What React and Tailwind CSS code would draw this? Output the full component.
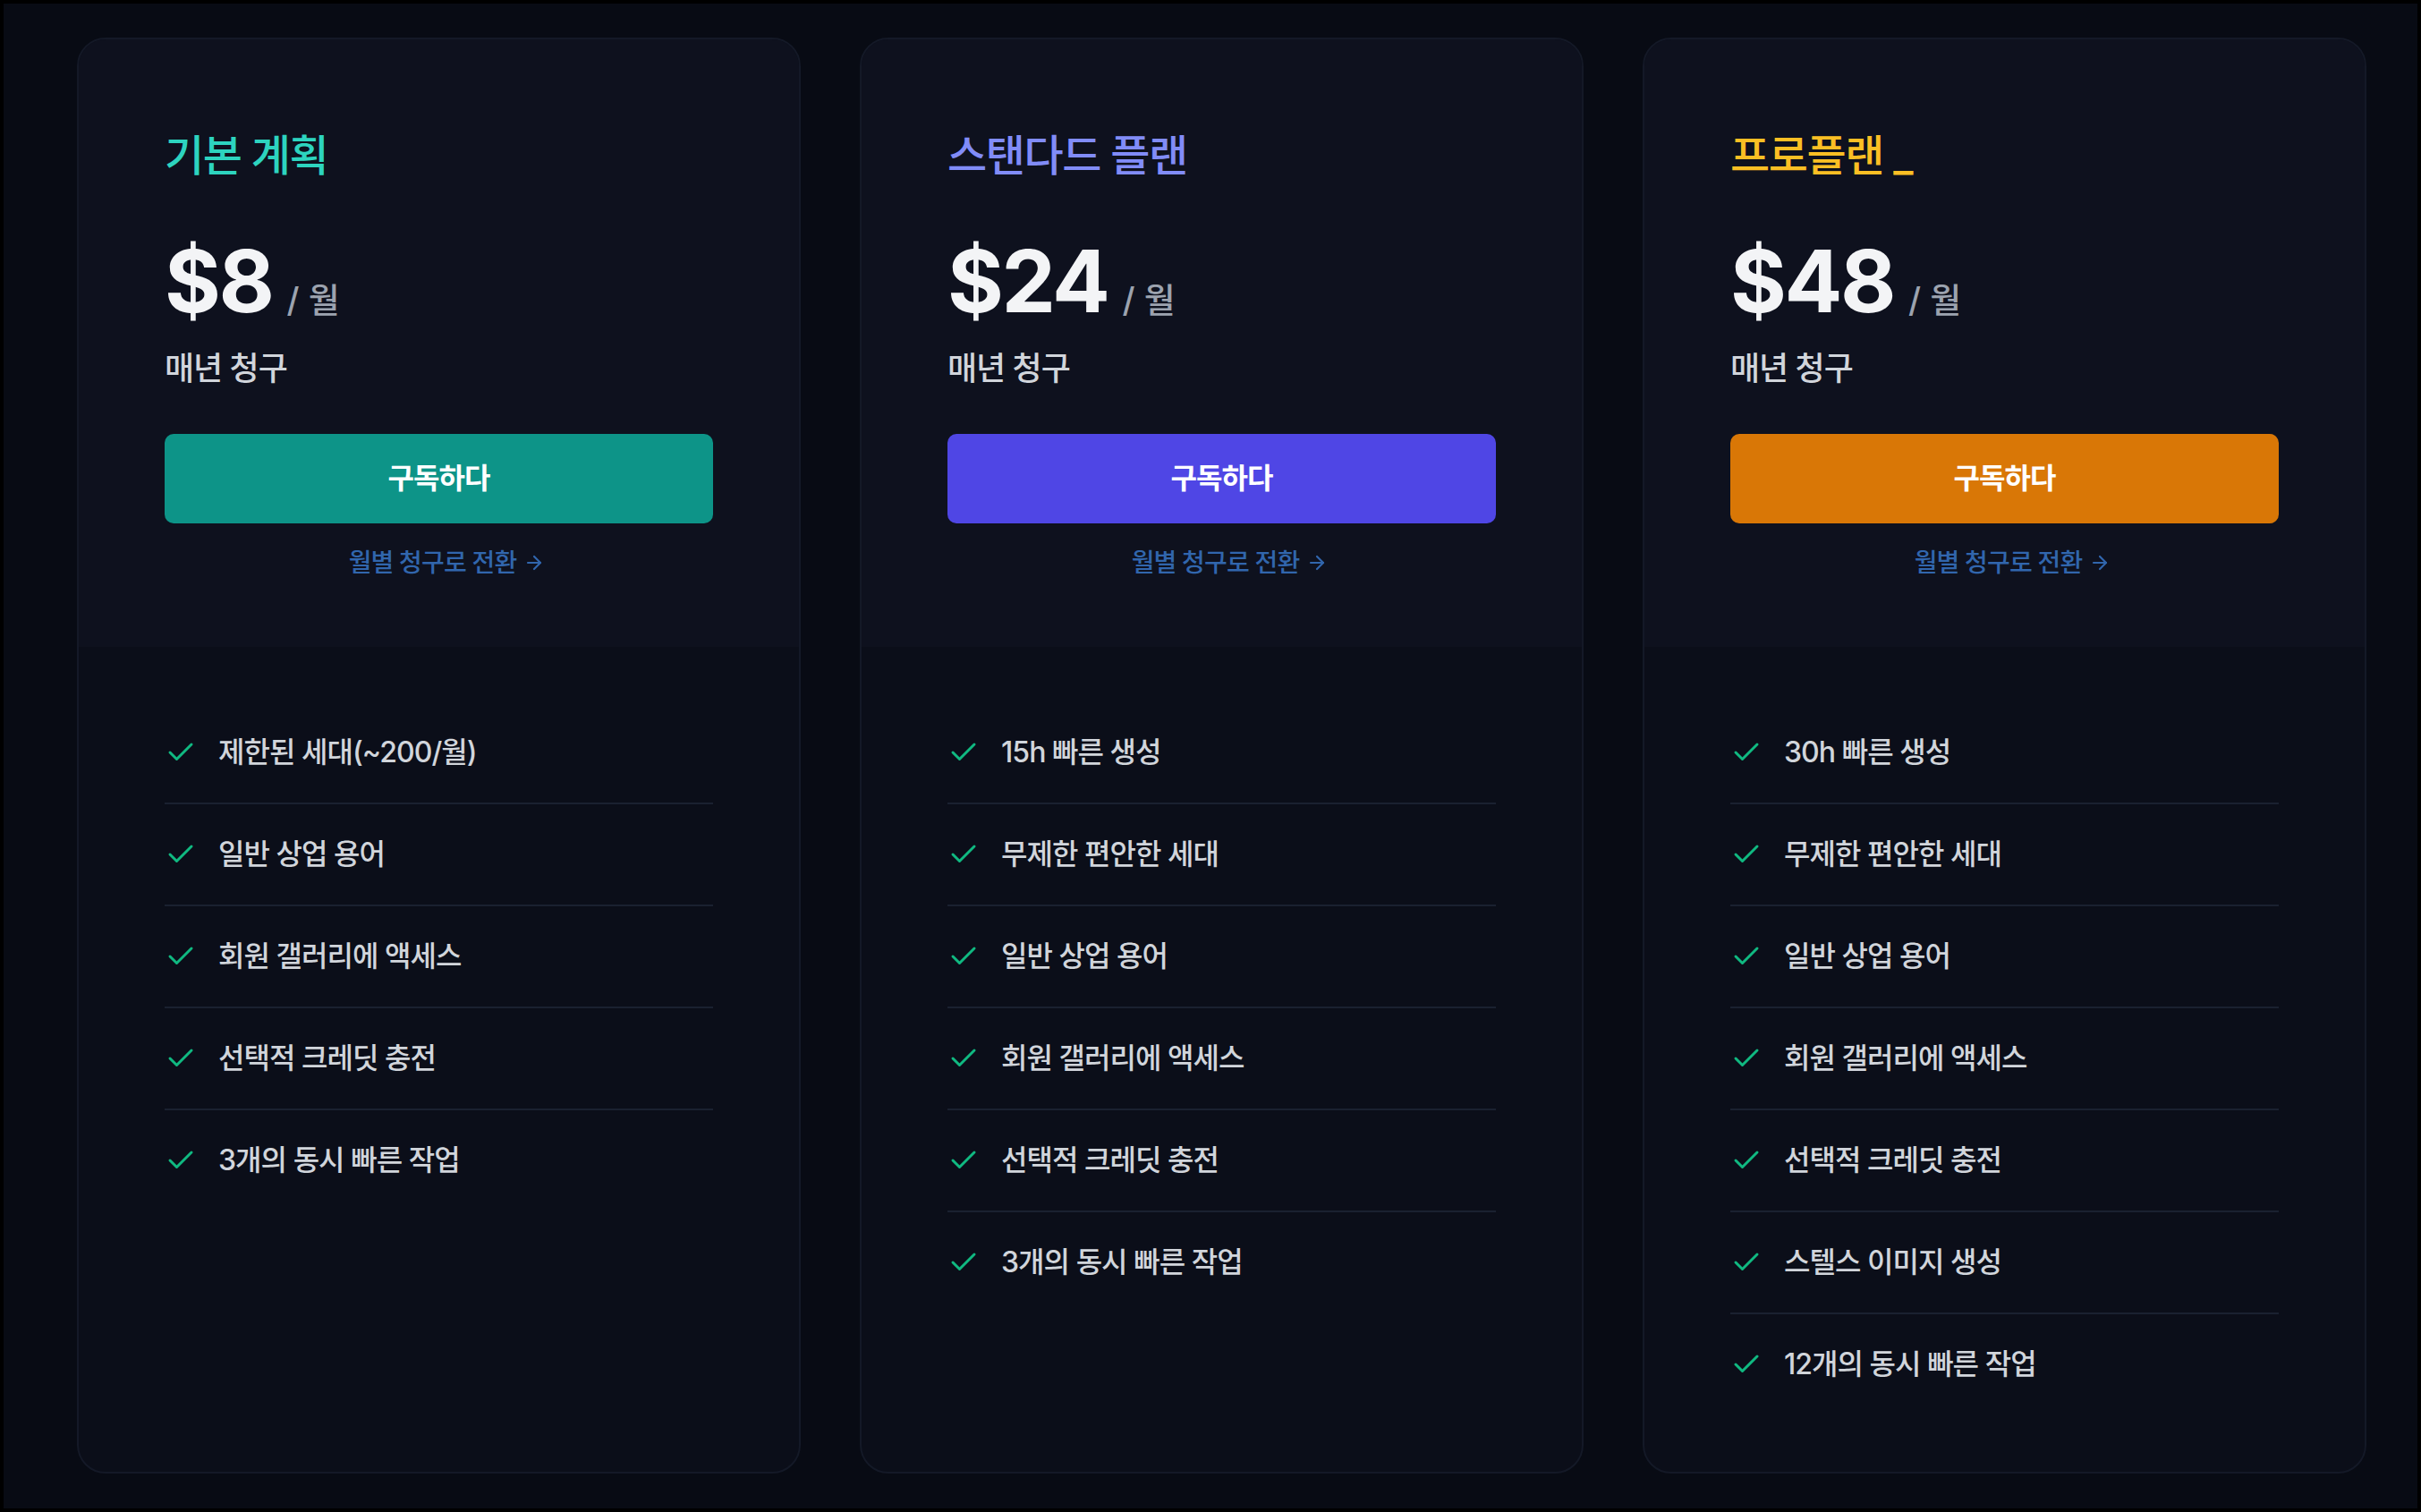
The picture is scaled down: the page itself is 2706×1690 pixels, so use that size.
import React from 'react';
import { Check, ArrowRight } from 'lucide-react';

const plans = [
  {
    name: '기본 계획',
    price: '$8',
    titleColor: 'text-[#2dd4bf]',
    btnColor: 'bg-[#0d9488]',
    features: ['제한된 세대(~200/월)', '일반 상업 용어', '회원 갤러리에 액세스', '선택적 크레딧 충전', '3개의 동시 빠른 작업'],
  },
  {
    name: '스탠다드 플랜',
    price: '$24',
    titleColor: 'text-[#818cf8]',
    btnColor: 'bg-[#4f46e5]',
    features: ['15h 빠른 생성', '무제한 편안한 세대', '일반 상업 용어', '회원 갤러리에 액세스', '선택적 크레딧 충전', '3개의 동시 빠른 작업'],
  },
  {
    name: '프로플랜 _',
    price: '$48',
    titleColor: 'text-[#fbbf24]',
    btnColor: 'bg-[#d97706]',
    features: ['30h 빠른 생성', '무제한 편안한 세대', '일반 상업 용어', '회원 갤러리에 액세스', '선택적 크레딧 충전', '스텔스 이미지 생성', '12개의 동시 빠른 작업'],
  },
];

const PlanCard = ({ plan }) => {
  return (
    <div className="flex flex-col rounded-[32px] border-2 border-[#141927] bg-[#0b0e19] overflow-hidden">
      <div className="bg-[#0e111e] px-[96px] pt-[98px] pb-[74px]">
        <p className={`text-[48px] leading-[64px] font-medium tracking-[-0.03em] ${plan.titleColor}`}>{plan.name}</p>
        <div className="mt-[60px] flex items-baseline">
          <span className="text-[96px] leading-none font-bold text-[#f3f4f6] tracking-tight">{plan.price}</span>
          <span className="ml-[16px] text-[38px] font-medium text-[#9ca3af]">/ 월</span>
        </div>
        <p className="mt-[20px] text-[36px] leading-[56px] font-medium tracking-[-0.03em] text-[#d1d5db]">매년 청구</p>
        <button className={`mt-[45px] w-full h-[100px] rounded-[10px] ${plan.btnColor} text-white text-[32px] font-semibold tracking-[-0.03em]`}>
          구독하다
        </button>
        <div className="mt-[24px] pl-[18px] flex items-center justify-center gap-[8px] text-[28px] leading-[40px] font-medium tracking-[-0.03em] text-[#3166ad]">
          <span>월별 청구로 전환</span>
          <ArrowRight size={24} strokeWidth={2.2} />
        </div>
      </div>
      <ul className="px-[96px] pt-[62px] divide-y-2 divide-[#1a2130]">
        {plan.features.map((item, index) => (
          <li key={index} className="flex items-center gap-[24px] py-[32px]">
            <Check size={36} strokeWidth={2} className="text-[#10b981] shrink-0" />
            <span className="text-[32px] leading-[48px] font-medium tracking-[-0.03em] text-[#d1d5db]">{item}</span>
          </li>
        ))}
      </ul>
    </div>
  );
};

const App = () => {
  return (
    <div className="w-[2706px] h-[1690px] bg-black p-[4px]" style={{ fontFamily: 'Inter, "Noto Sans CJK KR", sans-serif' }}>
      <div className="h-full bg-[#080b14] pl-[82px] pr-[57px] pt-[38px] pb-[39px]">
        <div className="grid grid-cols-3 gap-[66px] h-full">
          {plans.map((plan, index) => (
            <PlanCard key={index} plan={plan} />
          ))}
        </div>
      </div>
    </div>
  );
};

export default App;
